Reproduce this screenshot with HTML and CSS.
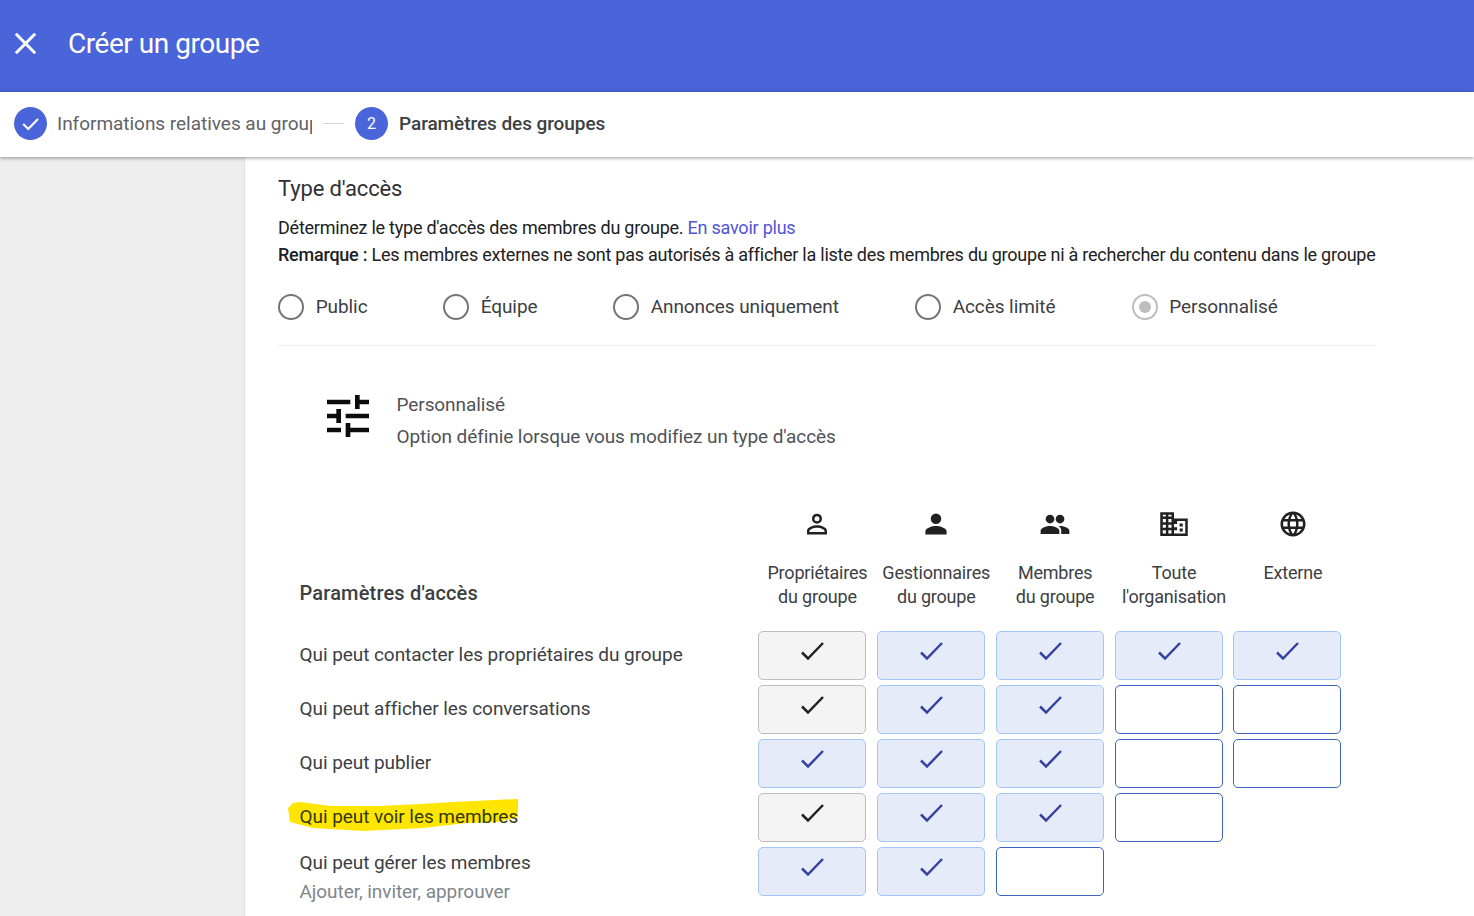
FILE: index.html
```html
<!DOCTYPE html>
<html lang="fr">
<head>
<meta charset="utf-8">
<title>Créer un groupe</title>
<link rel="stylesheet" href="styles.css">
</head>
<body>
<div class="page">
  <header class="appbar">
    <svg class="close" viewBox="0 0 24 24"><path d="M4.500 4.500l15 15M19.500 4.500l-15 15"/></svg>
    <h1 class="title">Créer un groupe</h1>
  </header>
  <nav class="stepper">
    <span class="bullet"><svg viewBox="0 0 34 34"><path d="M9.500 17.500l5.200 5.200 10-10.400"/></svg></span>
    <span class="step-label done">Informations relatives au groupe</span>
    <span class="step-line"></span>
    <span class="bullet">2</span>
    <span class="step-label active">Paramètres des groupes</span>
  </nav>
  <div class="body">
    <aside class="side"></aside>
    <main class="content">
      <h2 class="section">Type d'accès</h2>
      <p class="desc">Déterminez le type d'accès des membres du groupe. <a class="link">En savoir plus</a></p>
      <p class="desc"><span class="strong">Remarque :</span> Les membres externes ne sont pas autorisés à afficher la liste des membres du groupe ni à rechercher du contenu dans le groupe</p>
      <div class="radios">
        <label class="radio r1"><span class="dot"></span>Public</label>
        <label class="radio r2"><span class="dot"></span>Équipe</label>
        <label class="radio r3"><span class="dot"></span>Annonces uniquement</label>
        <label class="radio r4"><span class="dot"></span>Accès limité</label>
        <label class="radio"><span class="dot on"></span>Personnalisé</label>
      </div>
      <div class="custom">
        <svg class="tune" viewBox="3 3 18 18"><path d="M3 17v2h6v-2H3zM3 5v2h10V5H3zm10 16v-2h8v-2h-8v-2h-2v6h2zM7 9v2H3v2h4v2h2V9H7zm14 4v-2H11v2h10zm-6-4h2V7h4V5h-4V3h-2v6z"/></svg>
        <div class="custom-text">
          <div class="custom-name">Personnalisé</div>
          <div class="custom-note">Option définie lorsque vous modifiez un type d'accès</div>
        </div>
      </div>
      <div class="matrix">
        <div class="head">
          <div class="head-title">Paramètres d'accès</div>
          <div class="head-col">
            <svg class="ic" viewBox="0 0 24 24"><path fill-rule="evenodd" d="M12 3.700a4 4 0 1 1 0 8 4 4 0 0 1 0-8zm0 2a2 2 0 1 0 0 4 2 2 0 0 0 0-4zM12 13c3 0 8 1.500 8 4.300V20.300H4V17.300C4 14.500 9 13 12 13zm0 2c-2.800 0-5.700 1.300-6 2.500v.8h12v-.8c-.3-1.200-3.200-2.500-6-2.500z"/></svg>
            <span>Propriétaires<br>du groupe</span>
          </div>
          <div class="head-col">
            <svg class="ic" viewBox="0 0 24 24"><path d="M12 12a4.200 4.200 0 1 0 0-8.400 4.200 4.200 0 0 0 0 8.400zm0 1.500c-3 0-8.500 1.500-8.500 4.400v2.400h17v-2.400c0-2.900-5.500-4.400-8.500-4.400z"/></svg>
            <span>Gestionnaires<br>du groupe</span>
          </div>
          <div class="head-col">
            <svg class="ic" viewBox="0 0 24 24"><path d="M16 11.500a3.500 3.500 0 1 0 0-7 3.500 3.500 0 0 0 0 7zm-8 0a3.500 3.500 0 1 0 0-7 3.500 3.500 0 0 0 0 7zm0 2c-2.700 0-7.500 1.300-7.500 4v2.500h15v-2.500c0-2.700-4.800-4-7.500-4zm8 0c-.4 0-.7 0-1.100.1 1.300.9 2.100 2.100 2.100 3.900V20h6.500v-2.500c0-2.700-4.800-4-7.500-4z"/></svg>
            <span>Membres<br>du groupe</span>
          </div>
          <div class="head-col">
            <svg class="ic" viewBox="0 0 24 24"><path d="M12 7.500V2.500H1v19h22V7.500H12zM5.500 19.500H3v-2.500h2.500v2.500zm0-4.500H3v-2.500h2.500V15zm0-4.500H3V8h2.500v2.500zm0-4.500H3V4.500h2.500V6zM10 19.500H7.500V17H10v2.500zM10 15H7.500v-2.500H10V15zm0-4.500H7.500V8H10v2.500zM10 6H7.500V4.500H10V6zm11 13.500h-9V17h2.500v-2.500H12V12h2.500V9.500H12v0h9v10zM19 11.500h-2.500V14H19v-2.500zm0 4h-2.500V18H19v-2.500z"/></svg>
            <span>Toute<br>l'organisation</span>
          </div>
          <div class="head-col">
            <svg class="ic" viewBox="0 0 24 24"><path d="M12 2a10 10 0 1 0 0 20 10 10 0 0 0 0-20zm6.900 6h-3a15.600 15.600 0 0 0-1.400-3.600A8 8 0 0 1 18.900 8zM12 4c.8 1.200 1.500 2.500 1.900 4h-3.800c.4-1.500 1.100-2.800 1.900-4zM4.300 14a8.200 8.200 0 0 1 0-4h3.400a16.500 16.500 0 0 0 0 4H4.300zm.8 2h3c.3 1.300.8 2.500 1.400 3.600A8 8 0 0 1 5.100 16zm3-8h-3a8 8 0 0 1 4.400-3.600C8.900 5.500 8.400 6.700 8.100 8zM12 20c-.8-1.200-1.500-2.500-1.900-4h3.800c-.4 1.500-1.100 2.800-1.900 4zm2.300-6H9.700a14.700 14.700 0 0 1 0-4h4.600a14.700 14.700 0 0 1 0 4zm.2 5.600c.6-1.100 1.100-2.300 1.400-3.600h3a8 8 0 0 1-4.400 3.600zm1.800-5.600a16.500 16.500 0 0 0 0-4h3.400a8.200 8.200 0 0 1 0 4h-3.400z"/></svg>
            <span>Externe</span>
          </div>
        </div>

        <div class="row">
          <div class="row-label">Qui peut contacter les propriétaires du groupe</div>
          <div class="cell locked"><svg viewBox="0 0 24 24"><path d="M2 12.500l6 6L23 3"/></svg></div>
          <div class="cell on"><svg viewBox="0 0 24 24"><path d="M2 12.500l6 6L23 3"/></svg></div>
          <div class="cell on"><svg viewBox="0 0 24 24"><path d="M2 12.500l6 6L23 3"/></svg></div>
          <div class="cell on"><svg viewBox="0 0 24 24"><path d="M2 12.500l6 6L23 3"/></svg></div>
          <div class="cell on"><svg viewBox="0 0 24 24"><path d="M2 12.500l6 6L23 3"/></svg></div>
        </div>
        <div class="row">
          <div class="row-label">Qui peut afficher les conversations</div>
          <div class="cell locked"><svg viewBox="0 0 24 24"><path d="M2 12.500l6 6L23 3"/></svg></div>
          <div class="cell on"><svg viewBox="0 0 24 24"><path d="M2 12.500l6 6L23 3"/></svg></div>
          <div class="cell on"><svg viewBox="0 0 24 24"><path d="M2 12.500l6 6L23 3"/></svg></div>
          <div class="cell off"></div>
          <div class="cell off"></div>
        </div>
        <div class="row">
          <div class="row-label">Qui peut publier</div>
          <div class="cell on"><svg viewBox="0 0 24 24"><path d="M2 12.500l6 6L23 3"/></svg></div>
          <div class="cell on"><svg viewBox="0 0 24 24"><path d="M2 12.500l6 6L23 3"/></svg></div>
          <div class="cell on"><svg viewBox="0 0 24 24"><path d="M2 12.500l6 6L23 3"/></svg></div>
          <div class="cell off"></div>
          <div class="cell off"></div>
        </div>
        <div class="row">
          <div class="row-label marked">
            <svg class="marker" viewBox="0 0 230 34"><path d="M0 10L5 5 12 4 42 8 92 8 132 6 165 4 230 1V19L209 24 179 25 135 30 75 33 25 30 2 24z"/></svg>
            <span class="marked-text">Qui peut voir les membres</span>
          </div>
          <div class="cell locked"><svg viewBox="0 0 24 24"><path d="M2 12.500l6 6L23 3"/></svg></div>
          <div class="cell on"><svg viewBox="0 0 24 24"><path d="M2 12.500l6 6L23 3"/></svg></div>
          <div class="cell on"><svg viewBox="0 0 24 24"><path d="M2 12.500l6 6L23 3"/></svg></div>
          <div class="cell off"></div>
        </div>
        <div class="row">
          <div class="row-label two">Qui peut gérer les membres<small class="hint">Ajouter, inviter, approuver</small></div>
          <div class="cell on"><svg viewBox="0 0 24 24"><path d="M2 12.500l6 6L23 3"/></svg></div>
          <div class="cell on"><svg viewBox="0 0 24 24"><path d="M2 12.500l6 6L23 3"/></svg></div>
          <div class="cell off"></div>
        </div>
      </div>
    </main>
  </div>
</div>
</body>
</html>
```

FILE: styles.css
```css
* { box-sizing: border-box; }
html, body { margin: 0; height: 100%; }
body { font-family: Roboto, "Liberation Sans", sans-serif; color: #202124; background: #fff; overflow: hidden; }
.page { height: 916px; display: flex; flex-direction: column; overflow: hidden; }

.appbar { height: 92px; flex: none; background: #4a64da; display: flex; align-items: center; padding-left: 10px; padding-bottom: 5px; color: #fff; }
.close { width: 31px; height: 31px; fill: none; stroke: #fff; stroke-width: 2.300; margin-right: 27px; flex: none; }
.title { margin: 0; font-size: 28px; font-weight: 400; letter-spacing: -.47px; }

.stepper { height: 65px; flex: none; display: flex; align-items: center; padding-left: 14px; background: #fff; box-shadow: 0 1px 4px rgba(0,0,0,.4); position: relative; z-index: 2; padding-bottom: 2px; }
.bullet { width: 33px; height: 33px; border-radius: 50%; background: #4a64da; color: #fff; font-size: 16px; display: flex; align-items: center; justify-content: center; flex: none; }
.bullet svg { width: 33px; height: 33px; fill: none; stroke: #fff; stroke-width: 2.200; }
.step-label { font-size: 19px; margin-left: 11px; white-space: nowrap; letter-spacing: -.03px; }
.step-label.done { width: 255px; margin-left: 10px; overflow: hidden; color: #5f6368; }
.step-label.active { font-weight: 500; color: #3c4043; letter-spacing: -.07px; }
.step-line { width: 21px; height: 1px; background: #d5d5d5; margin: 0 11px 0 11px; flex: none; }

.body { flex: 1; display: flex; min-height: 0; }
.side { width: 245px; flex: none; background: #eeeeee; border-right: 1px solid #e0e0e0; }
.content { flex: 1; padding: 17px 99px 0 33px; min-width: 0; }
.section { margin: 0 0 11px; font-size: 22px; line-height: 29px; font-weight: 400; color: #303134; letter-spacing: -.14px; }
.desc { margin: 0; font-size: 18px; line-height: 27px; letter-spacing: -.232px; white-space: nowrap; color: #202124; }
.strong { font-weight: 500; }
.link { color: #4f55d6; }

.radios { display: flex; align-items: center; height: 53px; margin-top: 12px; }
.radio { display: flex; align-items: center; font-size: 19px; letter-spacing: -.08px; color: #3c4043; white-space: nowrap; }
.dot { width: 26px; height: 26px; border: 2px solid #757575; border-radius: 50%; margin-right: 11.700px; flex: none; display: flex; align-items: center; justify-content: center; }
.dot.on { border-color: #bdbdbd; }
.dot.on::after { content: ""; width: 12px; height: 12px; border-radius: 50%; background: #bdbdbd; }
.r1 { width: 165px; } .r2 { width: 170px; } .r3 { width: 302px; } .r4 { width: 216.600px; }

.custom { display: flex; border-top: 1px solid #eeeeee; margin-top: 12px; padding: 46px 0 0 49px; height: 156px; }
.tune { width: 42px; height: 42px; fill: #0c0c0c; margin-top: 3px; margin-right: 27.500px; flex: none; }
.custom-text { font-size: 19px; letter-spacing: -.08px; color: #4f5257; }
.custom-name { line-height: 24px; margin-top: 1px; }
.custom-note { line-height: 24px; margin-top: 8px; }

.matrix { padding-left: 21px; }
.head { display: flex; height: 130px; }
.head-title { width: 459px; flex: none; font-size: 20px; letter-spacing: .17px; font-weight: 500; color: #3c4043; padding: 80px 0 0 .500px; }
.head-col { width: 118.870px; flex: none; display: flex; flex-direction: column; align-items: center; font-size: 18px; line-height: 24px; letter-spacing: -.2px; color: #3c4043; text-align: center; white-space: nowrap; }
.head-col span { display: block; }
.ic { width: 30px; height: 30px; fill: #212121; margin-top: 8px; margin-bottom: 22px; flex: none; }

.row { display: flex; height: 49px; margin-bottom: 5px; }
.row-label { width: 459px; flex: none; font-size: 19px; line-height: 24px; letter-spacing: -.06px; color: #3c4043; padding: 12px 0 0 .500px; position: relative; white-space: nowrap; }
.row-label.two { padding-top: 4px; }
.hint { display: block; font-size: 19px; line-height: 24px; color: #80868b; margin-top: 5px; }
.marked-text { position: relative; color: #34370f; }
.marker { position: absolute; left: -11px; top: 5px; width: 230px; height: 34px; fill: #ffe600; }

.cell { width: 108px; height: 49px; margin-right: 10.870px; flex: none; border-radius: 5px; display: flex; align-items: center; justify-content: center; padding-bottom: 7px; }
.cell svg { width: 24px; height: 24px; fill: none; stroke-width: 2.500; }
.cell.locked { background: #f4f4f4; border: 1px solid #bdbdbd; }
.cell.locked svg { stroke: #212121; }
.cell.on { background: #e5ebf9; border: 1px solid #a3c6f7; }
.cell.on svg { stroke: #35429f; }
.cell.off { background: #fff; border: 1px solid #3c63bf; }
```
